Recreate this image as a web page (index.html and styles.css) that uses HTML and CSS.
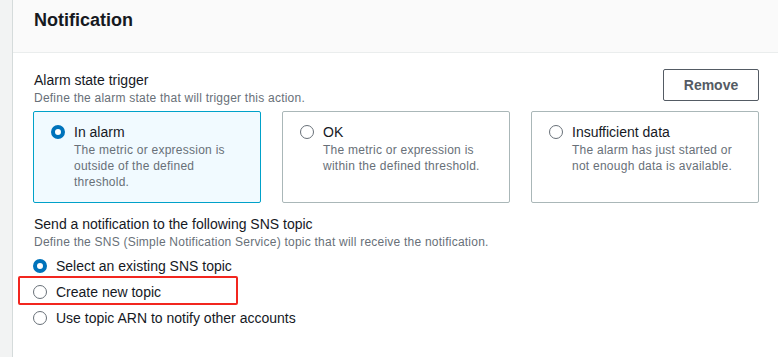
FILE: index.html
```html
<!DOCTYPE html>
<html lang="en">
  <head>
    <meta charset="UTF-8" />
    <title>Notification</title>
    <link rel="stylesheet" href="styles.css">
  </head>
  <body>
    <div class="page">
      <div class="rail"></div>

      <div class="panel">
        <div class="panel-header">
          <h2 class="panel-title">Notification</h2>
        </div>

        <div class="panel-body">
          <div class="field-head">
            <div>
              <div class="field-label">Alarm state trigger</div>
              <div class="field-desc">Define the alarm state that will trigger this action.</div>
            </div>
            <button class="btn">Remove</button>
          </div>

          <div class="tiles">
            <label class="tile tile-selected">
              <span class="radio radio-checked"></span>
              <span class="tile-text">
                <span class="tile-label">In alarm</span>
                <span class="tile-desc">The metric or expression is outside of the defined threshold.</span>
              </span>
            </label>
            <label class="tile">
              <span class="radio"></span>
              <span class="tile-text">
                <span class="tile-label">OK</span>
                <span class="tile-desc">The metric or expression is within the defined threshold.</span>
              </span>
            </label>
            <label class="tile">
              <span class="radio"></span>
              <span class="tile-text">
                <span class="tile-label">Insufficient data</span>
                <span class="tile-desc">The alarm has just started or not enough data is available.</span>
              </span>
            </label>
          </div>

          <div class="field-label field-gap">Send a notification to the following SNS topic</div>
          <div class="field-desc">Define the SNS (Simple Notification Service) topic that will receive the notification.</div>

          <div class="radio-group">
            <label class="radio-row">
              <span class="radio radio-checked"></span>
              Select an existing SNS topic
            </label>
            <label class="radio-row highlighted">
              <span class="radio"></span>
              Create new topic
            </label>
            <label class="radio-row">
              <span class="radio"></span>
              Use topic ARN to notify other accounts
            </label>
          </div>
        </div>
      </div>
    </div>
  </body>
</html>
```

FILE: styles.css
```css
:root {
  --text: #16191f;
  --muted: #687078;
  --blue: #0073bb;
  --line: #aab7b8;
}

body {
  margin: 0;
  font-family: "Liberation Sans", Arial, sans-serif;
  color: var(--text);
  background-color: #ffffff;
  height: 357px;
  overflow: hidden;
}

.page {
  display: flex;
  min-height: 357px;
}

.rail {
  width: 12px;
  flex-shrink: 0;
  background-color: #f2f3f3;
  border-right: 1px solid #d5dbdb;
}

.panel {
  flex: 1;
  display: flex;
  flex-direction: column;
}

.panel-header {
  height: 52px;
  background-color: #fafafa;
  border-bottom: 1px solid #eaeded;
  padding: 0 20px;
  display: flex;
  align-items: center;
}

.panel-title {
  margin: 0 0 11px 1px;
  font-size: 18px;
  font-weight: 700;
  color: var(--text);
}

.panel-body {
  padding: 17px 19px 0 20px;
}

.field-head {
  display: flex;
  justify-content: space-between;
  align-items: flex-start;
  margin-bottom: 4px;
}

.field-label {
  font-size: 14px;
  line-height: 20px;
  padding-left: 1px;
}

.field-desc {
  font-size: 12px;
  line-height: 17px;
  letter-spacing: 0.23px;
  color: var(--muted);
  padding-left: 1px;
}

.field-gap {
  margin-top: 11px;
}

.btn {
  margin-top: -1px;
  width: 96px;
  height: 32px;
  background-color: #ffffff;
  border: 1px solid #545b64;
  border-radius: 2px;
  color: #545b64;
  font-family: inherit;
  font-size: 14px;
  font-weight: 700;
  cursor: pointer;
}

.tiles {
  display: grid;
  grid-template-columns: repeat(3, 1fr);
  gap: 21px;
}

.tile {
  height: 92px;
  box-sizing: border-box;
  border: 1px solid var(--line);
  border-radius: 2px;
  padding: 10px 12px 0 17px;
  display: flex;
  gap: 9px;
  cursor: pointer;
}

.tile-selected {
  border-color: #00a1c9;
  background-color: #f1faff;
}

.tile .radio {
  margin-top: 3px;
}

.tile-text {
  display: flex;
  flex-direction: column;
}

.tile-label {
  font-size: 14px;
  line-height: 20px;
}

.tile-desc {
  font-size: 12px;
  line-height: 16px;
  letter-spacing: 0.25px;
  color: var(--muted);
}

.radio {
  width: 14px;
  height: 14px;
  box-sizing: border-box;
  border: 1px solid var(--muted);
  border-radius: 50%;
  flex-shrink: 0;
  background-color: #ffffff;
}

.radio-checked {
  border: 4px solid var(--blue);
}

.radio-group {
  display: flex;
  flex-direction: column;
  gap: 6px;
  margin-top: 5px;
}

.radio-row {
  position: relative;
  display: flex;
  align-items: center;
  gap: 9px;
  height: 20px;
  font-size: 14px;
  cursor: pointer;
}

/* red annotation box drawn over the row */
.highlighted::after {
  content: "";
  position: absolute;
  left: -15px;
  top: -6px;
  width: 220px;
  height: 29px;
  box-sizing: border-box;
  border: 2px solid #f2261f;
  border-radius: 2px;
}
```
